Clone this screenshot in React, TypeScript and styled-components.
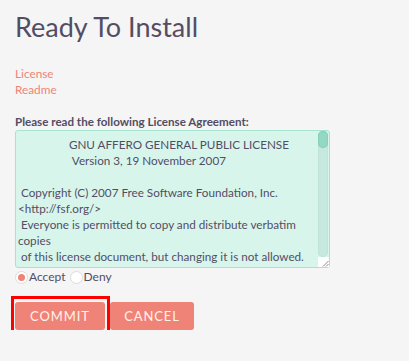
import styled, { createGlobalStyle } from "styled-components";

const GlobalStyle = createGlobalStyle`
  html, body {
    margin: 0;
    padding: 0;
    background: #f5f5f5;
  }
  body {
    font-family: Lato, "Open Sans", sans-serif;
    color: #534d64;
  }
`;

const Page = styled.main`
  padding: 10px 15px 0 15px;
  display: flex;
  flex-direction: column;
`;

const Title = styled.h1`
  margin: 0;
  font-size: 27px;
  line-height: 34px;
  font-weight: 400;
  color: #534d64;
`;

const Links = styled.nav`
  display: flex;
  flex-direction: column;
  margin-top: 22px;
`;

const DocLink = styled.a`
  font-size: 11.8px;
  line-height: 16px;
  color: #f08377;
  text-decoration: none;
  align-self: flex-start;
`;

const Label = styled.label`
  margin-top: 16px;
  font-size: 11.6px;
  line-height: 16px;
  font-weight: 700;
  color: #534d64;
`;

const LicenseBox = styled.div`
  position: relative;
  width: 315px;
  height: 138px;
`;

const LicenseText = styled.textarea`
  box-sizing: border-box;
  display: block;
  width: 100%;
  height: 100%;
  margin: 0;
  padding: 5px 14px 5px 2px;
  border: 1px solid #a6e4d2;
  border-radius: 3px;
  background: #d8f5ec;
  color: #534d64;
  font-family: Lato, "Open Sans", sans-serif;
  font-size: 11.7px;
  line-height: 16px;
  outline: none;
  resize: none;
  overflow: hidden;
`;

const ScrollTrack = styled.div`
  position: absolute;
  top: 1px;
  right: 2px;
  width: 10px;
  height: 126px;
  border-radius: 5px;
  background: #c6e8de;
  box-shadow: inset 0 0 0 1px #bfe3d9;
`;

const ScrollThumb = styled.div`
  width: 10px;
  height: 17px;
  border-radius: 5px;
  background: #93d8c4;
  box-shadow: inset 0 0 0 1px #86cfba;
`;

const ResizeCorner = styled.div`
  position: absolute;
  right: 1px;
  bottom: 1px;
  width: 11px;
  height: 10px;
  background: #ffffff;
  display: flex;
  align-items: flex-end;
  justify-content: flex-end;
`;

const Choices = styled.div`
  display: flex;
  align-items: center;
  margin-top: 1px;
  font-size: 12px;
  line-height: 16px;
`;

const Choice = styled.label`
  display: flex;
  align-items: center;
  gap: 1px;
  margin-right: 4px;
`;

const Radio = styled.input`
  appearance: none;
  box-sizing: border-box;
  width: 13px;
  height: 13px;
  margin: 0;
  border-radius: 50%;
  border: 1px solid #dcdcdc;
  background: #ffffff;
  position: relative;

  &:checked::after {
    content: "";
    position: absolute;
    left: 2px;
    top: 2px;
    width: 7px;
    height: 7px;
    border-radius: 50%;
    background: #f08377;
  }
`;

const Actions = styled.div`
  display: flex;
  gap: 5px;
  margin-top: 17px;
`;

const Button = styled.button<{ $focused?: boolean; $width: number }>`
  position: relative;
  width: ${(p) => p.$width}px;
  height: 28px;
  border: none;
  border-radius: 3px;
  background: #f08377;
  color: #fff3ec;
  font-family: Lato, "Open Sans", sans-serif;
  font-size: 13px;
  letter-spacing: 0.9px;
  text-transform: uppercase;
  cursor: pointer;
  outline: none;

  &::before {
    content: "";
    display: ${(p) => (p.$focused ? "block" : "none")};
    position: absolute;
    top: -6px;
    bottom: -6px;
    left: -4px;
    right: -5px;
    border: 3px solid #ff0000;
  }
`;

const license = `                 GNU AFFERO GENERAL PUBLIC LICENSE
                  Version 3, 19 November 2007

 Copyright (C) 2007 Free Software Foundation, Inc. <http://fsf.org/>
 Everyone is permitted to copy and distribute verbatim copies
 of this license document, but changing it is not allowed.

                            Preamble

  The GNU Affero General Public License is a free, copyleft license for
software and other kinds of works, specifically designed to ensure
cooperation with the community in the case of network server software.`;

const App = () => {
  return (
    <>
      <GlobalStyle />
      <Page>
        <Title>Ready To Install</Title>
        <Links>
          <DocLink href="#">License</DocLink>
          <DocLink href="#">Readme</DocLink>
        </Links>
        <Label htmlFor="license">Please read the following License Agreement:</Label>
        <LicenseBox>
          <LicenseText id="license" readOnly value={license} />
          <ScrollTrack>
            <ScrollThumb />
          </ScrollTrack>
          <ResizeCorner>
            <svg width="7" height="7" viewBox="0 0 7 7">
              <path d="M6.5 1 L1 6.5 M6.5 4 L4 6.5" stroke="#8a8a8a" strokeWidth="1" />
            </svg>
          </ResizeCorner>
        </LicenseBox>
        <Choices>
          <Choice>
            <Radio type="radio" name="agree" defaultChecked />
            Accept
          </Choice>
          <Choice>
            <Radio type="radio" name="agree" />
            Deny
          </Choice>
        </Choices>
        <Actions>
          <Button $focused $width={90}>Commit</Button>
          <Button $width={84}>Cancel</Button>
        </Actions>
      </Page>
    </>
  );
};

export default App;
